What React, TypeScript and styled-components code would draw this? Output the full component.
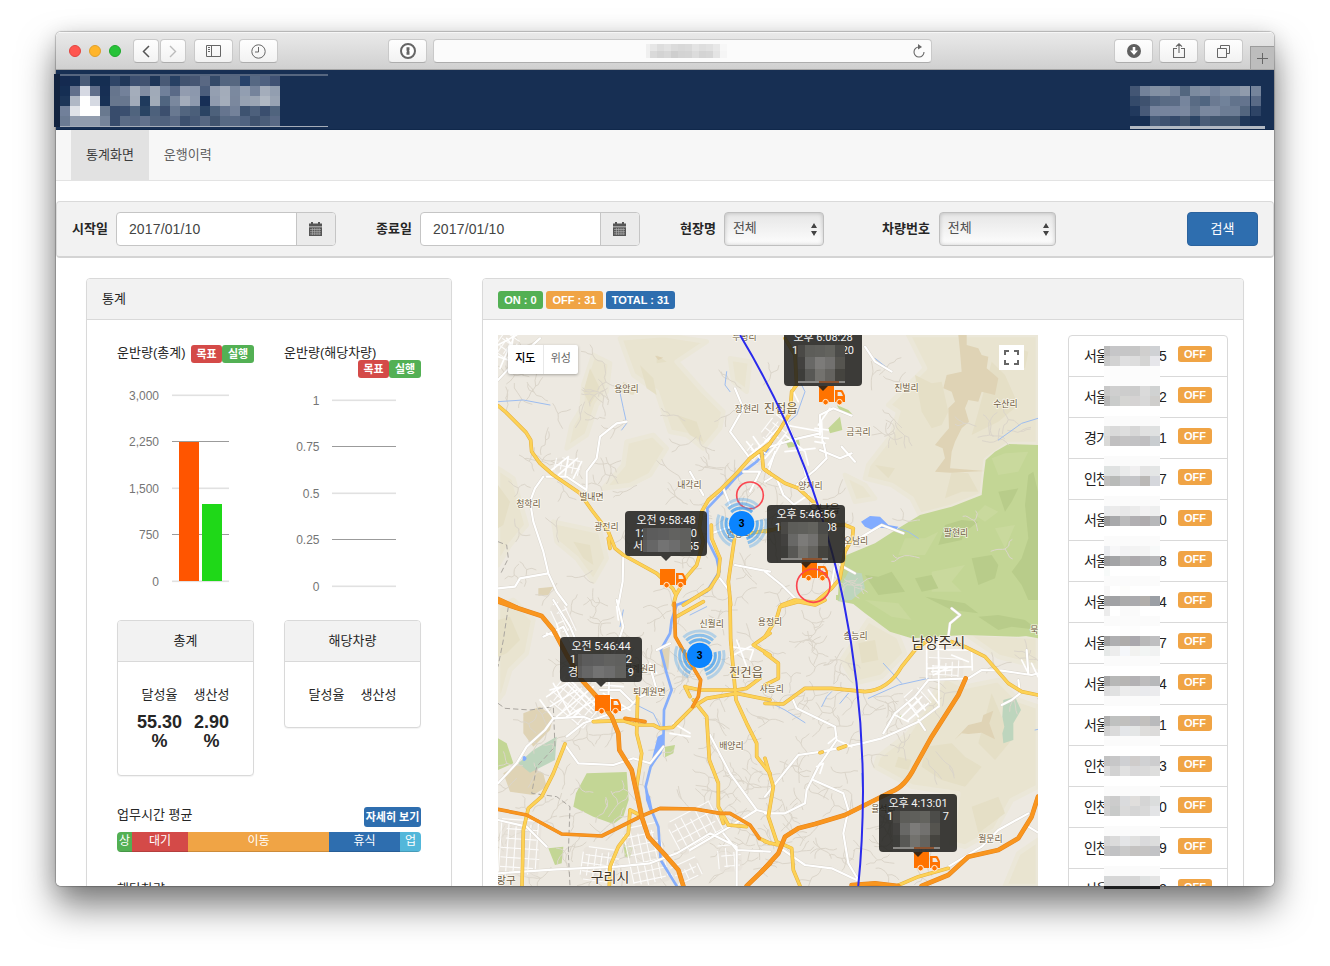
import React from 'react';
import styled, { createGlobalStyle } from 'styled-components';

const GlobalStyle = createGlobalStyle`
  * { box-sizing: border-box; }
  body { margin: 0; background: #fff; overflow: hidden; }
`;

const latin = '"Liberation Sans", "Noto Sans CJK KR", sans-serif';
const mapFont = 'Roboto, "Noto Sans CJK KR", sans-serif';

/* ---------- window ---------- */

const Desktop = styled.div`
  position: relative;
  width: 1330px;
  height: 966px;
  padding: 32px 56px 80px;
  overflow: hidden;
  background: #fff;
  font-family: ${latin};
  font-size: 13px;
  color: #262626;
`;
const Window = styled.div`
  width: 1218px;
  height: 854px;
  border-radius: 5px;
  box-shadow: 0 0 1px 1px rgba(0, 0, 0, 0.22), 0 20px 36px rgba(0, 0, 0, 0.5), 0 3px 22px rgba(0, 0, 0, 0.12);
`;
const Clip = styled.div`
  display: flex;
  flex-direction: column;
  height: 100%;
  overflow: hidden;
  border-radius: 5px;
  background: #fff;
`;
const Toolbar = styled.div`
  display: flex;
  flex: none;
  align-items: center;
  height: 38px;
  padding-left: 13px;
  border-top: 1px solid #f6f6f6;
  border-bottom: 1px solid #a5a5a5;
  background: linear-gradient(#e9e9e9, #d0d0d0);
`;
const Light = styled.span<{ $color: string; $edge: string }>`
  width: 12px;
  height: 12px;
  margin-right: 8px;
  border: 1px solid ${p => p.$edge};
  border-radius: 50%;
  background: ${p => p.$color};
`;
const ToolButton = styled.span<{ $w?: number; $ml?: number }>`
  display: flex;
  align-items: center;
  justify-content: center;
  flex: none;
  width: ${p => p.$w ?? 38}px;
  height: 24px;
  margin-left: ${p => p.$ml ?? 7}px;
  border: 1px solid #c9c9c9;
  border-bottom-color: #adadad;
  border-radius: 4px;
  background: linear-gradient(#fefefe, #f2f2f2);
`;
const Address = styled(ToolButton)`
  justify-content: flex-end;
  padding-right: 5px;
  background: #fbfbfb;
`;
const AddressMask = styled.span`
  display: flex;
  margin-right: 185px;
`;
const NewTab = styled.span`
  display: flex;
  flex: none;
  align-self: flex-end;
  align-items: center;
  justify-content: center;
  width: 24px;
  height: 23px;
  margin-left: 7px;
  border-left: 1px solid #9b9b9b;
  border-top: 1px solid #9b9b9b;
  background: #bdbdbd;
`;

/* ---------- page header ---------- */

const Banner = styled.header`
  flex: none;
  height: 60px;
  background: #172f53;
  border-bottom: 1px solid #10284b;
`;
const Nav = styled.nav`
  display: flex;
  flex: none;
  height: 51px;
  padding-left: 15px;
  border-bottom: 1px solid #e3e3e3;
  background: #f7f7f7;
`;
const NavItem = styled.a<{ $active?: boolean }>`
  padding: 0 15px;
  line-height: 49px;
  color: ${p => (p.$active ? '#3c3c3c' : '#606060')};
  background: ${p => (p.$active ? '#e2e2e2' : 'transparent')};
`;

/* ---------- search ---------- */

const SearchBar = styled.form`
  display: flex;
  flex: none;
  align-items: center;
  height: 57px;
  margin-top: 20px;
  padding: 0 15px;
  border: 1px solid #dadada;
  border-bottom: 2px solid #d4d4d4;
  border-radius: 4px;
  background: #f2f2f2;
`;
const Field = styled.label<{ $w?: number; $gap?: number }>`
  display: flex;
  align-items: center;
  flex: ${p => (p.$w ? `0 0 ${p.$w}px` : '1')};
  gap: ${p => p.$gap ?? 8}px;
  font-weight: bold;
  white-space: nowrap;
`;
const FieldName = styled.span`
  padding-bottom: 3px;
`;
const DateBox = styled.span`
  display: flex;
  width: 220px;
  height: 34px;
  overflow: hidden;
  border: 1px solid #c5c5c5;
  border-radius: 4px;
  background: #fff;
`;
const DateText = styled.span`
  flex: 1;
  padding-left: 12px;
  font-size: 14px;
  font-weight: normal;
  line-height: 32px;
  letter-spacing: 0.15px;
  color: #444;
`;
const DateAddon = styled.span`
  display: flex;
  align-items: center;
  justify-content: center;
  width: 39px;
  border-left: 1px solid #c5c5c5;
  background: #ebebeb;
`;
const SelectBox = styled.span<{ $w: number }>`
  display: flex;
  align-items: center;
  justify-content: space-between;
  width: ${p => p.$w}px;
  height: 34px;
  padding: 0 6px 0 8px;
  border: 1px solid #bfbfbf;
  border-radius: 4px;
  background: linear-gradient(#e6e6e6, #fdfdfd);
  box-shadow: inset 0 0 4px rgba(0, 0, 0, 0.2);
  font-weight: normal;
  line-height: 1;
  color: #505050;
`;
const SelectValue = styled.span`
  padding-bottom: 4px;
`;
const SearchButton = styled.button`
  width: 71px;
  height: 34px;
  padding: 0 0 3px;
  border: 1px solid #2b639e;
  border-radius: 4px;
  background: #2e6eaf;
  font: 13px ${latin};
  color: #fff;
`;

/* ---------- panels ---------- */

const Columns = styled.div`
  display: flex;
  gap: 30px;
  padding: 20px 30px 0;
`;
const Panel = styled.section<{ $w: number; $h?: number }>`
  flex: none;
  width: ${p => p.$w}px;
  height: ${p => (p.$h ? `${p.$h}px` : 'auto')};
  border: 1px solid #d9d9d9;
  border-radius: 4px;
  background: #fff;
  box-shadow: 0 1px 1px rgba(0, 0, 0, 0.05);
`;
const PanelHead = styled.div<{ $center?: boolean }>`
  display: flex;
  align-items: center;
  justify-content: ${p => (p.$center ? 'center' : 'flex-start')};
  gap: 3px;
  height: 41px;
  padding: 0 15px;
  border-bottom: 1px solid #d9d9d9;
  border-radius: 3px 3px 0 0;
  background: #f2f2f2;
`;
const HeadText = styled.span`
  padding-bottom: 4px;
`;
const BadgeRow = styled.span`
  display: flex;
  gap: 3px;
  padding-top: 2px;
`;
const colors = { green: '#53b054', orange: '#f0a445', blue: '#2e6eaf', red: '#d44a48', cyan: '#53b7da' };
type Tone = keyof typeof colors;
const Badge = styled.span<{ $tone: Tone; $w: number; $h?: number; $plain?: boolean }>`
  display: inline-flex;
  align-items: center;
  justify-content: center;
  flex: none;
  width: ${p => p.$w}px;
  height: ${p => p.$h ?? 18}px;
  border-radius: 3px;
  background: ${p => colors[p.$tone]};
  font-size: 11px;
  font-weight: bold;
  line-height: 1;
  color: #fff;
  white-space: nowrap;
`;
const StatsBody = styled.div`
  padding: 15px 30px 0;
`;
const StatsPair = styled.div<{ $h: number }>`
  display: flex;
  gap: 30px;
  align-items: flex-start;
  height: ${p => p.$h}px;
`;
const ChartColumn = styled.div`
  width: 137px;
`;
const ChartTitle = styled.div`
  display: flex;
  flex-wrap: wrap;
  justify-content: space-between;
  padding-top: 10px;
  line-height: 15px;
  white-space: nowrap;
`;
const Legend = styled.span`
  display: flex;
  margin-left: auto;
`;
const ChartSvg = styled.svg`
  display: block;
  overflow: visible;
`;
const Gauges = styled.div`
  display: grid;
  grid-template-columns: 52px 52px;
  justify-content: center;
  padding-top: 23px;
  text-align: center;
  line-height: 19px;
`;
const GaugeValue = styled.div`
  padding-top: 9px;
  font-size: 18px;
  font-weight: bold;
`;
const WorkHead = styled.div`
  display: flex;
  justify-content: space-between;
  height: 25px;
  line-height: 15px;
`;
const Progress = styled.div`
  display: flex;
  height: 20px;
  overflow: hidden;
  border-radius: 4px;
`;
const Segment = styled.span<{ $tone: Tone; $w: number }>`
  width: ${p => p.$w}px;
  background: ${p => colors[p.$tone]};
  box-shadow: inset 0 -1px 0 rgba(0, 0, 0, 0.15);
  font-size: 12px;
  line-height: 19px;
  text-align: center;
  color: #fff;
`;
const SectionLabel = styled.div`
  padding-top: 28px;
  line-height: 18px;
`;
const LiveBody = styled.div`
  display: flex;
  gap: 30px;
  padding: 15px 15px 0;
`;
const VehicleList = styled.ul`
  width: 160px;
  margin: 0;
  padding: 0;
  border: 1px solid #d9d9d9;
  border-radius: 4px 4px 0 0;
  list-style: none;
`;
const Vehicle = styled.li`
  display: flex;
  align-items: flex-start;
  height: 41px;
  padding: 10px 15px 0;
  border-bottom: 1px solid #d9d9d9;
`;
const Plate = styled.span`
  display: flex;
  justify-content: space-between;
  width: 82px;
  margin-right: 12px;
  font-size: 14px;
  line-height: 20px;
  letter-spacing: -0.8px;
  color: #222;
`;

/* ---------- map ---------- */

const MapView = styled.div`
  position: relative;
  flex: none;
  width: 540px;
  height: 552px;
  overflow: hidden;
  font-family: ${mapFont};
`;
const MapType = styled.div`
  position: absolute;
  left: 10px;
  top: 10px;
  display: flex;
  width: 70px;
  height: 29px;
  border-radius: 2px;
  background: #fff;
  box-shadow: 0 1px 3px rgba(0, 0, 0, 0.3);
  font-size: 11px;
  line-height: 28px;
  text-align: center;
`;
const MapTypeItem = styled.span<{ $on?: boolean }>`
  flex: 1;
  border-right: ${p => (p.$on ? '1px solid #e8e8e8' : 'none')};
  font-weight: ${p => (p.$on ? 500 : 400)};
  color: ${p => (p.$on ? '#000' : '#666')};
`;
const Fullscreen = styled.div`
  position: absolute;
  left: 501px;
  top: 10px;
  display: flex;
  align-items: center;
  justify-content: center;
  width: 25px;
  height: 25px;
  background: #fff;
`;
const Tip = styled.div<{ $x: number; $y: number; $w: number; $h: number }>`
  position: absolute;
  left: ${p => p.$x - 498}px;
  top: ${p => p.$y - 335}px;
  width: ${p => p.$w}px;
  height: ${p => p.$h}px;
  padding-top: 3px;
  border-radius: 4px;
  background: rgba(28, 28, 26, 0.85);
  font-size: 11px;
  line-height: 13px;
  text-align: center;
  color: #f4f4f4;
  &::after {
    content: '';
    position: absolute;
    left: calc(50% - 5px);
    top: 100%;
    border: 5px solid transparent;
    border-top-color: rgba(28, 28, 26, 0.85);
  }
`;
const TipRow = styled.div<{ $inset: number }>`
  display: flex;
  justify-content: space-between;
  padding: 0 ${p => p.$inset}px;
`;
const TipMask = styled.div<{ $x: number }>`
  position: absolute;
  left: ${p => p.$x}px;
  top: 17px;
  display: flex;
  flex-direction: column;
`;
const Overlay = styled.div<{ $x: number; $y: number }>`
  position: absolute;
  left: ${p => p.$x}px;
  top: ${p => p.$y}px;
  display: flex;
`;

/* Mosaic block: rows of space separated hex colours, "-" leaves a cell open. */
function Mosaic({ rows, cell = 10, first, rowHeight = cell }: { rows: string[]; cell?: number; first?: number; rowHeight?: number }) {
  const grid = rows.map(r => r.split(' '));
  const f = first ?? cell;
  const w = f + (Math.max(...grid.map(r => r.length)) - 1) * cell;
  return (
    <svg width={w} height={rows.length * rowHeight} shapeRendering="crispEdges">
      {grid.map((r, y) =>
        r.map((c, x) =>
          c === '-' ? null : (
            <rect key={`${x}-${y}`} x={x === 0 ? 0 : f + (x - 1) * cell} y={y * rowHeight} width={x === 0 ? f : cell} height={rowHeight} fill={`#${c}`} />
          ),
        ),
      )}
    </svg>
  );
}

const logoRows = [
  '142a50 162e53 4b5c78 152e51 152e52 2f4567 203759 3c4f70 415270 1e3658 495a76 274063 42536f 465673 596883 344a69 53657f 566780 27426a 566883 4f6180 3f5173',
  '152e53 62708c d6d9e3 616f8b 172f54 66758d 73819a a4adbb 818da3 a0aab8 70809a 5a6a87 929caf 8c98ad 4c5e7c 949fb1 a3acba 7b899f 929eb1 75839b a4adbb 929eb0',
  '1c3558 b0b8c5 ffffff d5d9e2 183155 68778e 68778f a2abb9 1f3a5d a1abb8 506580 7a889e a3acba 8e9aae 172f56 919caf a4adbb 7b889e 97a2b2 9ba5b4 b0b8c3 98a3b3',
  '71809a e0e3e8 ffffff ffffff 69798f 384c6c 3b4f6f 50647e 294363 4d617c 3c4f6e 697991 52657f 4b5f7a 2a4363 4d617b 66758f 74829a 3e5370 4d607c 3a4e6e 50647e',
  '6b7b93 929dae 929dae 929dae 75849a 384c6c 5b6c86 566782 62718c 52647e 50627e 5b6b86 3c506e 475a77 566782 42556f 586a84 586984 506380 40536f 4a5d79 596985',
];
const accountRows = [
  '435674 73829a 8290a3 8491a3 75849b 52667f 7c8b9f 8390a5 76859d 8290a4 8391a5 909bac',
  '344a6a 3f526f 50637e 596b84 5b6c86 76859d 596b84 506580 6b7a92 71829a 62738c 64748e',
  '21395d 485a78 76849d 76849d 76849e 7a889f 62738b 7a889f 7a889f 6d7d95 6d7d95 53667f',
  '172f53 172f53 475b78 3e5270 34496a 43566f 2b4464 4b5d78 42566f 42556f 43566f 203859',
];
const accountEdge = ['75849b', '596a86', '2e4466', '182f53'];
const plateRows = [
  'bbbbbb c6c6c8 c6c6c7 c6c6c6 d0cfce cfd1d4', 'c9caca d2d2d2 dfdfe0 dddddd d5d5d4 e6e6ea', 'fdfdfd fcfcfc fcfcfc fcfcfc fcfcfc fcfcfc', 'fdfdfd fcfcfc fcfcfc fcfcfc fcfcfc fcfcfc',
  'c8c8c8 cfcfcf cdcdcd cccccc dadada d0d2d2', 'b9b9b9 cacccb d5d5d3 d5d3d3 d8d8d8 cfcecc', 'ffffff ffffff ffffff ffffff ffffff ffffff', 'fbfbfb fbfbfb fbfbfb fbfbfb fbfbfb fbfbfb',
  'dedfde dadada dedede d7d7d7 e1e1e1 dfe1e1', 'd9d9d7 c0bfc0 c4c3c4 c2c2c4 c0bfc1 c9cdd0', 'ffffff ffffff ffffff ffffff ffffff ffffff', 'fbfbfb fbfbfb fbfbfb fbfbfb fbfbfb fbfbfb',
  'dee2e1 e0e2e2 eaebeb f1f0f1 e4e4e4 e4e6e6', 'c0bfbe b8bab8 c5c6c8 c5c5c8 bab8b6 d5d7dc', 'ffffff ffffff ffffff ffffff ffffff ffffff', 'fbfbfb fbfbfb fbfbfb fbfbfb fbfbfb fbfbfb',
  'e8eaec ebebeb e7e7e8 ebebeb f2f1f2 eeefef', '9b9b9b a8a9ab bbbbbc b1afb2 afacae b7b8ba', 'ffffff ffffff ffffff ffffff ffffff ffffff', 'fbfbfb fbfbfb fbfbfb fbfbfb fbfbfb fbfbfb',
  'eaecef f7f7f8 f2f2f3 f3f3f3 f4f4f4 f7f9f9', '9c9d9e a3a4a6 b1b1b1 aca9ac b1b1b3 b5b6b8', 'f7faf9 ffffff ffffff ffffff ffffff ffffff', 'fbfbfb fbfbfb fbfbfb fbfbfb fbfbfb fbfbfb',
  'f7f7f7 ffffff fdfdfb ffffff ffffff ffffff', 'a2a2a3 a1a2a5 ababab aaaaae b1aeab 9b9fa5', 'ececec ffffff fafafa fafafa ffffff ffffff', 'fbfbfb fbfbfb fbfbfb fbfbfb fbfbfb fbfbfb',
  'ffffff ffffff fdfdfd fdfdfd ffffff ffffff', 'a1a1a1 afafb1 aeacab aaa8ad b9b9b9 bfbfc1', 'e5e8e7 ededed f5f7fa f2f2f0 f2f5f4 f1f2f2', 'fbfbfb fbfbfb fbfbfb fbfbfb fbfbfb fbfbfb', 'ffffff ffffff ffffff ffffff ffffff ffffff',
  'a7a7a8 b7b8b7 b7b5b3 b3b1b4 bdbcbd b7b8ba', 'dcdcdd e0e1e1 ececec eaeaeb e9eaed ebebed', 'fbfbfb fbfbfb fbfbfb fbfbfb fbfbfb fbfbfb', 'ffffff ffffff ffffff ffffff ffffff ffffff',
  'afafaf bfc1c0 c1c0be bdbdc0 c2c0bd b9babc', 'd1d1d1 dadada e4e6e9 e4e6e6 dedddb dcdbda', 'fbfbfb fbfbfb fbfbfb fbfbfb fbfbfb fbfbfb', 'ffffff ffffff ffffff ffffff ffffff ffffff',
  'c3c3c3 c7c7c8 cfd0d3 cfcccb d0d1d3 cdcdce', 'dedede d2d2d2 e1e1e1 d9d8d9 dadada dededd', 'ffffff ffffff ffffff ffffff ffffff ffffff', 'fbfbfb fbfbfb fbfbfb fbfbfb fbfbfb fbfbfb',
  'd0d0d0 cccccc dadbdd e0dedc d5d5d5 dbdddd', 'd2d2d2 c8cac9 dadada d5d5d5 d9d9d9 e3e4e6', 'ffffff ffffff ffffff ffffff ffffff ffffff', 'fbfbfb fbfbfb fbfbfb fbfbfb fbfbfb fbfbfb',
  'd5d5d6 dbdbdb e4e5e7 e1e1e0 dadadc dcdddd', 'c5c5c6 c1c2c4 cacaca c5c3c1 c5c4c4 c2c3c6', 'ffffff ffffff ffffff ffffff ffffff ffffff', 'fbfbfb fbfbfb fbfbfb fbfbfb fbfbfb fbfbfb',
  'd5d7d8 d7d7d7 d7d7d8 d6d6d6 e0e2e2 e5e5e5',
];

/* Map drawing units are a third of a pixel; the sheet is cut in four 825-unit quarters. */
const quarters = { nw: [0, 0], ne: [825, 0], sw: [0, 825], se: [825, 825] } as const;
type Quarter = keyof typeof quarters;
type Sheet = Partial<Record<Quarter, string>>;
function Layer({ sheet, stroke = 'none', width, fill = 'none', dash }: { sheet: Sheet; stroke?: string; width?: number; fill?: string; dash?: string }) {
  return (
    <>
      {(Object.keys(sheet) as Quarter[]).map(q => (
        <path key={q} transform={`translate(${quarters[q][0]} ${quarters[q][1]})`} d={sheet[q]} stroke={stroke} strokeWidth={width} fill={fill} strokeDasharray={dash} strokeLinejoin="round" strokeLinecap={dash ? 'butt' : 'round'} />
      ))}
    </>
  );
}

const hills: Sheet = {
  nw: 'M310 90L360 115 350 200 320 240 290 330 230 370 245 300 275 250 280 180ZM390 40L520 30 650 50 560 110 640 200 700 260 690 310 640 370 590 330 540 320 500 200 430 150ZM410 350L490 330 530 370 480 450 420 480 340 490 400 420ZM190 590L330 620 350 700 310 770 260 700 200 650ZM24 430L70 460 110 600 60 660 24 720ZM720 100L780 110 770 200 730 170Z',
  ne: 'M430 30L819 30 819 357 730 357 662 405 650 510 560 545 465 570 440 520 380 480 300 460 310 420 380 330 400 260 370 240 430 180 480 130ZM240 450L300 480 330 520 270 530Z',
  sw: 'M24 20L70 0 130 60 110 160 60 210 40 280 24 300ZM300 130L340 150 330 200 300 180Z',
  se: 'M540 230L600 260 700 240 760 300 819 320 819 560 740 600 690 690 600 740 560 730 580 580 440 560 330 500 340 470 430 400ZM230 180L310 60 400 110 420 160 350 230 270 250ZM600 100L819 110 819 200 700 170ZM720 858L760 760 819 720 819 858Z',
};
const darkHills: Sheet = {
  nw: 'M400 170L440 190 430 210 390 200ZM500 90L530 110 500 115ZM560 270L620 290 640 350 600 330ZM24 480L60 530 40 600 24 610ZM450 120L490 160 500 210 470 190ZM300 130L330 190 300 240 280 200ZM250 650L300 660 310 720 280 700Z',
  ne: 'M450 150L500 175 530 170 550 260 530 300 500 310 470 260ZM680 110L720 150 760 240 700 290 620 330 640 260ZM560 440L610 445 640 500 590 500 540 520ZM330 420L390 430 370 460ZM730 60L790 80 780 130 750 110Z',
  sw: 'M24 60L60 50 90 120 50 160 24 170Z',
  se: 'M480 440L560 430 600 470 650 500 600 560 530 540 470 500ZM680 280L740 420 690 480 640 430ZM620 620L700 590 720 640 640 700ZM400 470L440 480 430 510 390 500ZM280 130L330 120 340 180 290 190Z',
};
const ridges: Sheet = {
  ne: 'M580 30L605 30 605 60 640 70 650 90 670 95 665 130 700 160 690 210 650 200 640 230 610 225 600 250 612 290 590 310 570 350 560 380 555 430 660 438 555 443 510 440 540 400 533 370 510 360 530 335 552 310 550 250 570 230 560 200 535 190 545 150 590 140 585 80Z',
  se: 'M568 420L610 375 650 365 655 345 685 332 673 370 680 390 690 418 650 398 610 402 590 400Z',
  sw: 'M100 340L150 320 190 350 180 390 130 440 100 400ZM40 520L90 490 160 520 170 560 130 585 60 575ZM515 150L540 140 535 210 515 200Z',
  nw: 'M145 790L190 785 175 810 145 812ZM495 92L520 98 505 105Z',
};
const forest: Sheet = {
  ne: 'M819 360L730 357 690 380 662 405 655 460 650 510 560 545 465 570 400 610 330 655 245 690 225 715 218 828 819 940Z',
  se: 'M213 0L250 0 300 40 375 95 440 115 600 105 760 110 819 105 819 -15 213 -15ZM400 350L410 345 410 358Z',
  sw: 'M290 520L410 516 416 600 400 650 370 672 310 650 250 620 258 580ZM24 415L50 430 70 490 24 510ZM525 440L555 435 550 460 525 472ZM175 745L220 740 215 790 195 795ZM400 730L428 745 420 775 405 770Z',
};
const parks: Sheet = {
  ne: 'M215 240L250 255 262 268 230 265ZM190 310L225 275 232 315 195 325ZM60 345L100 335 105 362 70 368Z',
};
const forestShade: Sheet = {
  ne: 'M790 450L805 440 819 500 819 825 790 825 770 780 740 740 770 700 790 640 780 540ZM540 600L590 585 640 590 600 620 590 645 520 660ZM620 700L680 690 700 720 690 760 640 780ZM300 750L340 755 380 740 420 800 340 810ZM700 500L760 490 740 530 720 560ZM450 760L500 750 520 790 470 800Z',
  se: 'M480 -10L600 10 640 40 560 30ZM640 50L700 45 780 60 819 90 740 80 700 90Z',
};
const forestLight: Sheet = {
  ne: 'M680 400L720 385 790 380 760 440 700 450ZM420 640L480 640 520 620 480 690 400 690ZM500 740L600 720 560 770 590 800 500 800ZM690 610L750 600 720 670ZM660 540L700 560 660 590 630 570Z',
  se: 'M300 0L400 10 440 60 380 50Z',
};
const wetlands: Sheet = {
  sw: 'M200 410L195 480 120 518 85 490 130 450Z',
  se: 'M715 300L750 290 768 330 745 370 745 420 715 430 712 400 718 380 712 350Z',
  ne: 'M250 740L290 745 300 790 260 825 220 828 235 770Z',
};
const water: Sheet = {
  ne: 'M288 590L315 573 345 575 370 600 400 605 395 612 345 608 325 616 300 605Z',
  sw: 'M98 470A7 7 0 1 1 98 481ZM503 410L522 400 515 460 495 485 485 480ZM466 570L480 590 490 640 482 640 468 600Z',
};
const river: Sheet = {
  nw: 'M840 365L800 410 740 455 695 505 652 550 655 650 680 700 688 740 650 800 600 825 560 840',
  sw: 'M560 15L545 60 540 100 512 150 530 220 545 270 522 330 520 440 482 500 467 560 480 620 505 680 512 780 560 858',
  ne: 'M0 380L20 350',
};
const streams: Sheet = {
  nw: 'M24 230L100 225 180 240M385 180L400 250 410 295 395 315M710 140L705 180 720 200',
  ne: 'M95 150L120 200 95 270 60 300M330 100L380 140M819 280L770 295 700 345M400 610L430 620 460 640',
  sw: 'M430 310L490 340 515 390M390 80L400 30M600 45L650 20',
  se: 'M0 300L60 330 120 368M310 295L400 255 490 235M170 320L185 290 200 275M355 190L410 250M810 390L819 388M225 310L250 280M290 520L292 560',
};
const boundary: Sheet = {
  nw: 'M24 650L50 660 55 700 30 750',
  sw: 'M55 20L40 120 24 200M24 310L45 325 120 330 190 320 195 440 140 500 125 580 200 590 240 620 235 760 240 858',
};
const whiteRoads: Sheet = {
  nw: 'M160 455L135 490 120 530 130 590 160 680 175 745 200 800 230 840M170 455L230 455 290 495M290 490L290 440 320 400 330 335 380 295 410 290M400 690L398 770 385 840M24 790L75 785 90 760 175 745M780 400L720 320 760 250 735 190M640 510L600 440M760 440L810 440 780 500M665 625L735 600M735 720L840 740M690 760L720 800M24 165L90 95 150 40M700 490L720 540',
  ne: 'M65 290L110 400 122 450M0 370L100 340 165 325M165 330L165 270 205 250 260 272M175 350L185 400 150 435 95 480M300 65L330 110 380 140M165 375L225 400 260 385M230 365L270 410M35 460L55 510 110 560M350 600L240 665M210 720L200 780M350 600L415 625M0 740L50 780 90 820M225 720L270 745M0 470L25 455M30 380L10 440',
  sw: 'M24 550L80 490 110 440 165 390 190 355 280 350 320 365M190 0L240 80 270 150M355 290L360 200 400 80 380 0M230 410L280 370 420 320 443 295M225 435L265 490 370 495 430 475 480 490 520 440M480 200L500 270 440 295M660 405L720 520 800 630 840 640M740 858L740 740 660 700 560 760 480 790M800 630L720 680 600 750M24 820L200 808 380 800 480 790M24 660L110 680 170 740M500 150L540 130M330 270L390 270 430 310M700 700L740 750 840 755M160 110L220 80 260 160',
  se: 'M80 290L95 325 210 380 215 420 160 500 125 570 120 610M0 590L100 465 170 455 290 430 350 415 395 395 460 365 520 320M355 400L390 340 450 290 490 240 610 235 650 210 710 212 800 225 840 215M550 110L555 70 585 45 560 25M145 540L235 580 250 630 235 700 250 790 280 840M40 740L120 795 200 805 275 840M550 800L650 740 700 690 790 640M760 240L765 280 740 300 710 315M790 220L785 150M0 640L60 640 120 610M790 680L840 710M460 360L480 390M140 540L165 490',
};
const cityRoads: Sheet = {
  nw: 'M185 435L235 395M205 450L262 400M225 455L235 395M250 460L275 410M24 60L80 30M30 130L60 60M24 95L70 110M50 40L90 90M70 30L60 110M780 390L840 340M770 350L810 400M790 335L825 385',
  ne: 'M0 400L60 330 120 380M0 350L50 300M10 420L50 350M60 380L150 370M60 300L170 320M150 310L190 315M150 335L190 340M150 350L180 355M170 290L172 350M195 250L160 300M80 190L100 230M120 380L130 420M85 540L130 510',
  se: 'M485 130L485 235M520 125L522 320M485 145L550 150 620 150 622 210M485 205L622 200M500 215L560 210M505 225L555 200M560 165L610 185M410 350L470 290M430 360L490 310M450 290L480 330M430 310L460 350M390 345L430 365M490 270L520 310M155 500L175 490 165 520M190 430L215 410M770 180L790 220M800 190L819 230M215 420L260 440',
  sw: 'M190 250L240 340M170 290L230 250 310 330M180 320L260 270M200 350L310 260M230 350L330 290M150 300L190 355M340 280L420 330M340 255L400 260M380 20L385 60M170 100L210 110 200 70M215 260L180 270M240 240L340 340M250 350L290 310M550 370L600 400M540 400L600 410M720 140L790 150 780 180M740 120L770 200M720 170L800 130M480 190L500 220',
};
const yellowRoads: Sheet = {
  nw: 'M24 242L48 262 108 322 122 345 125 380 150 415 190 450 270 505 305 555 355 620 375 670 400 690 500 745 548 790 558 810M840 355L780 400 740 445 690 495 655 525 635 560 628 610 640 650 620 720 590 755 558 810 550 840M664 600L665 640 690 700 685 750 660 790 620 815 580 840M735 630L725 700 715 770 722 840M815 380L820 430 840 445M750 630L840 615M355 640L360 670',
  ne: 'M0 375L40 320 75 265 80 200 95 180 90 90 60 40M0 435L60 475 100 490 150 535 190 580M0 620L60 605 240 600 265 610 262 640 240 680 225 760 200 790 150 832 90 825 50 840M165 690L190 560',
  sw: 'M225 432L190 520 155 590 115 625 100 690 96 858M455 648L420 630 415 700 385 740 360 800 358 858M443 290L440 400 455 460 440 560 455 640M310 365L400 362 440 375 490 375 510 385 548 382 610 320 650 295 740 280 840 300M585 260L630 270 740 270 770 265 810 235M610 300L650 350 658 480 685 550 685 620 715 675 770 680M720 0L722 120 738 300 770 370 800 430 800 470 840 520M840 100L790 135 840 165M560 50L640 5M690 640L700 670M585 260L600 290M808 715L840 730',
  se: 'M0 310L55 312 120 265 200 265 300 275Q370 270 410 200L450 150 490 120M560 125L600 140 660 170 730 250 770 275 819 285M0 160L40 190 40 235 0 255M0 110L35 55 45 20 100 5 150 15 180 0M0 475L25 560 10 650 35 725 80 745 85 810 105 858M0 725L40 735M395 858L460 830 550 805M165 458L172 456M220 446L242 438',
};
const highways: Sheet = {
  nw: 'M24 822L80 848',
  sw: 'M24 5L155 48 190 90 230 165 275 240 320 290 365 350 385 400 388 450 425 510 440 580 455 650 475 710 530 770 565 810 580 858M770 858L840 790',
  se: 'M602 235L580 285 500 410 450 500Q420 560 380 575L330 600 240 645 150 672 100 685 60 710 40 760 -10 815M260 855L330 850 400 858M470 858L550 825 610 770 700 750 760 715 800 650 819 590',
};
const ringRoads: Sheet = {
  sw: 'M24 628L110 645 215 702 335 708 455 648 510 625 615 627 690 640 720 640 780 675 808 715M405 355L465 365M553 10L556 110 590 170 632 240 625 290 608 320',
};

function random(seed: number) {
  let s = seed;
  return () => {
    s = (s * 1664525 + 1013904223) % 4294967296;
    return s / 4294967296;
  };
}

/* Country lanes that fork as they climb the valleys: [x, y, width, height, count]. */
const laneAreas = [
  [30, 60, 330, 360, 20], [560, 140, 270, 200, 6], [560, 400, 280, 420, 26], [840, 480, 260, 330, 22],
  [1120, 60, 120, 420, 8], [330, 60, 60, 260, 7], [60, 480, 240, 330, 9], [320, 480, 240, 160, 5],
  [420, 830, 400, 820, 72], [830, 840, 330, 820, 64], [40, 1100, 380, 560, 40], [1150, 1080, 240, 220, 12],
  [1150, 1440, 200, 220, 10], [1560, 960, 90, 200, 5], [1440, 300, 190, 80, 6], [1240, 550, 300, 160, 4], [240, 830, 250, 250, 16],
];
function buildLanes() {
  const r = random(77);
  let d = '';
  const grow = (x: number, y: number, a: number, steps: number) => {
    d += `M${x.toFixed(0)} ${y.toFixed(0)}`;
    for (let i = 0; i < steps; i++) {
      a += (r() - 0.5) * 1.3;
      x += Math.cos(a) * (7 + r() * 10);
      y += Math.sin(a) * (7 + r() * 10);
      d += `L${x.toFixed(0)} ${y.toFixed(0)}`;
    }
    return [x, y, a];
  };
  for (const [ax, ay, w, h, n] of laneAreas) {
    for (let i = 0; i < n; i++) {
      const [x, y, a] = grow(ax + r() * w, ay + r() * h, r() * 6.28, 4);
      grow(x, y, a + 0.7, 3);
      grow(x, y, a - 0.7, 3);
    }
  }
  return d;
}
const lanes = buildLanes();

/* Town streets: [cx, cy, width, height, angle, step]. */
const towns = [
  [260, 1130, 150, 110, 40, 20], [90, 1570, 120, 170, 4, 22], [470, 1590, 110, 180, -12, 21],
  [620, 1510, 150, 110, -28, 24], [330, 1620, 110, 100, 8, 19], [50, 65, 60, 70, 35, 17], [235, 425, 80, 45, 12, 18],
  [860, 320, 70, 80, 38, 20], [800, 390, 60, 45, 40, 16], [1365, 1030, 110, 60, 3, 19], [1280, 1130, 70, 60, 48, 19],
  [720, 1600, 70, 80, -5, 24], [220, 880, 50, 100, -25, 22], [590, 1640, 90, 60, -25, 21],
];
function Towns() {
  return (
    <>
      {towns.map(([cx, cy, w, h, a, step], i) => {
        let d = '';
        for (let x = -w / 2; x <= w / 2; x += step) d += `M${x} ${-h / 2 + (Math.abs(x * 7) % 23)}V${h / 2 - (Math.abs(x * 3) % 19)}`;
        for (let y = -h / 2; y <= h / 2; y += step * 1.3) d += `M${-w / 2 + (Math.abs(y * 3) % 17)} ${y}H${w / 2 - (Math.abs(y * 5) % 21)}`;
        return (
          <g key={i} transform={`translate(${cx} ${cy}) rotate(${a})`}>
            <rect x={-w / 2} y={-h / 2} width={w} height={h} rx="14" fill="#e6e1d8" opacity="0.6" />
            <path d={d} stroke="#fff" strokeWidth="3.4" fill="none" opacity="0.85" />
          </g>
        );
      })}
    </>
  );
}

type Place = [string, number, number, number?];
const places: Place[] = [
  ['용암리', 409, 190], ['장현리', 771, 250], ['내각리', 598, 478], ['별내면', 304, 515], ['청학리', 115, 537], ['광전리', 349, 604],
  ['두평리', 763, 35], ['진접읍', 872, 250, 37], ['진벌리', 1249, 187], ['수산리', 1546, 236], ['금곡리', 1105, 321], ['양지리', 961, 482],
  ['오남읍', 1003, 553, 34], ['오남리', 1098, 647], ['팔현리', 1398, 624], ['연평리', 745, 625], ['신월리', 665, 895], ['용정리', 840, 890], ['진건읍', 768, 1043, 37],
  ['퇴계원리', 450, 1032], ['퇴계원면', 478, 1100], ['배양리', 724, 1262], ['사능리', 845, 1092], ['구리시', 360, 1656, 42], ['랑구', 48, 1666, 32],
  ['송능리', 1096, 932], ['남양주시', 1345, 953, 44], ['묵', 1633, 915], ['율석리', 1180, 1452], ['월문리', 1501, 1540],
];

const Label = styled.text<{ $size: number }>`
  font-family: 'Noto Sans CJK KR', sans-serif;
  font-size: ${p => p.$size}px;
  text-anchor: middle;
  fill: ${p => (p.$size > 40 ? '#3d3326' : '#6d5a3f')};
  stroke: #fffdf6;
  stroke-width: 5px;
  stroke-opacity: 0.75;
  stroke-linejoin: round;
  paint-order: stroke;
`;

function arc(cx: number, cy: number, r: number, mid: number, half: number) {
  const p = (deg: number) => {
    const t = (deg * Math.PI) / 180;
    return `${(cx + r * Math.cos(t)).toFixed(1)} ${(cy + r * Math.sin(t)).toFixed(1)}`;
  };
  return `M${p(mid - half)}A${r} ${r} 0 0 1 ${p(mid + half)}`;
}
function Cluster({ x, y }: { x: number; y: number }) {
  return (
    <g>
      {[47, 60, 73].map((r, i) => (
        <g key={r} stroke="#3d9df0" strokeWidth="9" fill="none" opacity={[0.75, 0.55, 0.32][i]}>
          {[-90, 30, 160].map(m => (
            <path key={m} d={arc(x, y, r, m, 42)} />
          ))}
        </g>
      ))}
      <circle cx={x} cy={y} r="38" fill="#0a84ff" />
      <text x={x} y={y + 11} textAnchor="middle" fontFamily="Liberation Sans, sans-serif" fontWeight="bold" fontSize="31" fill="#000">3</text>
    </g>
  );
}
function Truck({ x, y }: { x: number; y: number }) {
  return (
    <g transform={`translate(${(x - 490) * 3} ${(y - 325) * 3}) scale(3)`}>
      <path d="M0 0H15V16H0Z" fill="#ff7300" />
      <path d="M16 4H22.2Q23.4 4 24 5.2L25.6 8.6Q26 9.4 26 10.2V16H16ZM18.6 6V10H24L22.3 6.6Q22 6 21.4 6Z" fill="#ff7300" fillRule="evenodd" />
      {[6.6, 20.5].map(cx => (
        <circle key={cx} cx={cx} cy="16.2" r="2.8" fill="#ff7300" stroke="#fff3e0" strokeWidth="1" />
      ))}
    </g>
  );
}

function MapCanvas() {
  return (
    <svg width="540" height="551" viewBox="24 30 1620 1653">
      <rect x="0" y="0" width="1700" height="1700" fill="#ede9e1" />
      <Layer sheet={hills} fill="#e9e4d0" stroke="#ebe7d8" width={14} />
      <Layer sheet={darkHills} fill="#e5dfc6" />
      <Layer sheet={ridges} fill="#dfd3b5" />
      <Layer sheet={forest} fill="#c3d695" />
      <Layer sheet={parks} fill="#c3d695" />
      <Layer sheet={forestLight} fill="#c9d99d" />
      <Layer sheet={forestShade} fill="#b8cc8a" />
      <Layer sheet={wetlands} fill="#bdd5bd" />
      <path d={lanes} stroke="#dbd5ca" strokeWidth="3" fill="none" strokeLinejoin="round" />
      <Towns />
      <Layer sheet={boundary} stroke="#aaa6a0" width={3} dash="16 9" />
      <Layer sheet={streams} stroke="#9dbdf0" width={3} />
      <Layer sheet={river} stroke="#86aefb" width={8} />
      <Layer sheet={water} fill="#82acff" />
      <Layer sheet={whiteRoads} stroke="#d8d3ca" width={9} />
      <Layer sheet={cityRoads} stroke="#fff" width={5} />
      <Layer sheet={whiteRoads} stroke="#fff" width={6.5} />
      <Layer sheet={yellowRoads} stroke="#e4b040" width={11} />
      <Layer sheet={yellowRoads} stroke="#fdd256" width={8} />
      <Layer sheet={ringRoads} stroke="#e5831c" width={11} />
      <Layer sheet={ringRoads} stroke="#f9961f" width={8} />
      <Layer sheet={highways} stroke="#e5831c" width={14} />
      <Layer sheet={highways} stroke="#f9961f" width={11} />
      {places.map(([name, x, y, size = 26.5]) => (
        <Label key={name} x={x} y={y + size * 0.36} $size={size}>{name}</Label>
      ))}
      <circle cx="780" cy="511" r="40" fill="none" stroke="#fb4650" strokeWidth="5" />
      <Cluster x={755} y={596} />
      <Cluster x={629} y={991} />
      <Truck x={660} y={569} />
      <Truck x={819} y={386} />
      <Truck x={802} y={562} />
      <Truck x={595} y={695} />
      <Truck x={914} y={852} />
      <circle cx="970" cy="782" r="50" fill="none" stroke="#fb4650" strokeWidth="5" />
      <path d="M750 30Q870 230 945 430T1060 825Q1118 1110 1119 1400Q1118 1560 1104 1690" fill="none" stroke="#2a2aec" strokeWidth="6" />
    </svg>
  );
}

interface TipData { x: number; y: number; w: number; h: number; time: string; a: [string, string]; b?: [string, string]; }
const tips: TipData[] = [
  { x: 625, y: 511, w: 82, h: 45, time: '오전 9:58:48', a: ['12', '0'], b: ['서', '55'] },
  { x: 784, y: 328, w: 78, h: 58, time: '오후 6:08:28', a: ['12', '20'] },
  { x: 767, y: 505, w: 78, h: 58, time: '오후 5:46:56', a: ['1', '08'] },
  { x: 560, y: 637, w: 82, h: 45, time: '오전 5:46:44', a: ['1', '2'], b: ['경', '9'] },
  { x: 879, y: 794, w: 78, h: 58, time: '오후 4:13:01', a: ['1', '7'] },
];
const wideMask = ['555452 5c5c5c 5e5e5e 626260 60605e', '5b5b5b 666666 737373 6d6d6d 62625f'];
const tallMask = ['4a4946 5d5d59 5f5f5b 63635e 4c4c49', '42413f 686866 7c7b79 72716f 55544f', '3d3d3a 585855 73726e 64635f 45443f'];

/* ---------- charts ---------- */

interface ChartProps { labels: string[]; axis: number; from: number; to: number; top: number; bars?: [number, number, string][]; }
function BarChart({ labels, axis, from, to, top, bars = [] }: ChartProps) {
  return (
    <ChartSvg width="137" height="222">
      {labels.map((l, i) => {
        const y = top + i * 46.5;
        return (
          <g key={l}>
            <text x={axis} y={y + 4.5} textAnchor="end" fontFamily="Liberation Sans, sans-serif" fontSize="12" fill="#757575">{l}</text>
            <rect x={from} y={i % 2 ? Math.floor(y) : y - 0.5} width={to - from} height={i % 2 ? 1 : 1.6} fill={i % 2 ? '#9b9b9b' : '#e1e1e1'} />
          </g>
        );
      })}
      {bars.map(([x, h, c]) => (
        <rect key={x} x={x} y={top + 186 - h} width="20" height={h} fill={c} />
      ))}
    </ChartSvg>
  );
}

const Stroke = (p: React.SVGProps<SVGSVGElement>) => <svg fill="none" stroke="#666" strokeWidth="1" {...p} />;

function CalendarIcon() {
  return (
    <svg width="13" height="14" fill="#555">
      <path d="M0 1.5H13V4.5H0Z" />
      <path d="M2 0H4V2H2ZM9 0H11V2H9Z" />
      <path d="M0 5.3H13V14H0Z" />
      <path d="M1 7.5H12M1 9.7H12M1 11.9H12M3.4 6V13M5.7 6V13M8 6V13M10.2 6V13" stroke="#bbb" strokeWidth="0.6" />
    </svg>
  );
}
function Arrows() {
  return (
    <svg width="6" height="13" fill="#444">
      <path d="M3 0L6 5H0ZM3 13L6 8H0Z" />
    </svg>
  );
}

const vehicles: [string, string][] = [
  ['서울', '5'], ['서울', '2'], ['경기', '1'], ['인천', '7'], ['서울', '0'], ['서울', '8'], ['서울', '4'],
  ['서울', '7'], ['서울', '4'], ['서울', '1'], ['인천', '3'], ['인천', '0'], ['인천', '9'], ['서울', '2'],
];

function SafariToolbar() {
  return (
    <Toolbar>
      <Light $color="#ff5650" $edge="#e2443f" />
      <Light $color="#ffb52b" $edge="#e0a02a" />
      <Light $color="#27c339" $edge="#1ea92c" />
      <ToolButton $w={26} $ml={4}><Stroke width="8" height="13" stroke="#555" strokeWidth="1.5"><path d="M7 1L1.5 6.5 7 12" /></Stroke></ToolButton>
      <ToolButton $w={26} $ml={1}><Stroke width="8" height="13" stroke="#bbb" strokeWidth="1.4"><path d="M1 1L6.5 6.5 1 12" /></Stroke></ToolButton>
      <ToolButton $w={39} $ml={8}><Stroke width="15" height="12"><path d="M.5 .5H14.5V11.5H.5ZM5.5 .5V11.5M2 2.5H4M2 4.5H4M2 6.5H4" /></Stroke></ToolButton>
      <ToolButton $w={39} $ml={6}><Stroke width="15" height="15"><circle cx="7.5" cy="7.5" r="6.7" /><path d="M7.5 3V8H4" /></Stroke></ToolButton>
      <ToolButton $w={39} $ml={110}>
        <svg width="16" height="16"><circle cx="8" cy="8" r="7" fill="#fff" stroke="#666" strokeWidth="2" /><path d="M6.5 4.2H9.5V7L9 7.8 9.5 8.5V11.8H6.5V9L7 8.2 6.5 7.5Z" fill="#666" /></svg>
      </ToolButton>
      <Address $w={499} $ml={6}>
        <AddressMask>
          <Mosaic cell={7} first={4} rows={['f0f0f0 e6e6e6 dddddd e2e2e2 dbdbdb d8d8d8 dadada e3e3e3 dedede e1e1e1 e8e8e8 f7f7f7', 'f0f0f0 d9d9d9 d3d3d3 d7d7d7 cecece d3d3d3 d4d4d4 dcdcdc d4d4d4 d6d6d6 e4e4e4 f5f5f5']} />
        </AddressMask>
        <Stroke width="14" height="15" strokeWidth="1.1"><path d="M7 3A5 5 0 1 0 12 8" /><path d="M6 0L10 3 6 5.6Z" fill="#666" stroke="none" /></Stroke>
      </Address>
      <ToolButton $w={39} $ml={182}>
        <svg width="14" height="14"><circle cx="7" cy="7" r="7" fill="#5f5f5f" /><path d="M5.7 3H8.3V6.6H11L7 11 3 6.6H5.7Z" fill="#fff" /></svg>
      </ToolButton>
      <ToolButton $w={39} $ml={6}><Stroke width="12" height="16" strokeWidth="1.1"><path d="M4 5.5H.5V14.5H11.5V5.5H8M6 10V1M3 3.6L6 .8 9 3.6" /></Stroke></ToolButton>
      <ToolButton $w={39} $ml={6}><Stroke width="13" height="13"><path d="M.5 3.5H9.5V12.5H.5ZM3.5 3V.5H12.5V8.5H10" /></Stroke></ToolButton>
      <NewTab><Stroke width="11" height="11"><path d="M5.5 0V11M0 5.5H11" /></Stroke></NewTab>
    </Toolbar>
  );
}

export default function App() {
  return (
    <Desktop>
      <GlobalStyle />
      <Window>
        <Clip>
          <SafariToolbar />
          <Banner />
          <Nav>
            <NavItem $active>통계화면</NavItem>
            <NavItem>운행이력</NavItem>
          </Nav>
          <SearchBar>
            {['시작일', '종료일'].map(l => (
              <Field key={l} $w={304}>
                <FieldName>{l}</FieldName>
                <DateBox>
                  <DateText>2017/01/10</DateText>
                  <DateAddon><CalendarIcon /></DateAddon>
                </DateBox>
              </Field>
            ))}
            <Field $w={202}><FieldName>현장명</FieldName><SelectBox $w={100}><SelectValue>전체</SelectValue><Arrows /></SelectBox></Field>
            <Field $gap={9}><FieldName>차량번호</FieldName><SelectBox $w={117}><SelectValue>전체</SelectValue><Arrows /></SelectBox></Field>
            <SearchButton type="button">검색</SearchButton>
          </SearchBar>
          <Columns>
            <Panel $w={366} $h={700}>
              <PanelHead><HeadText>통계</HeadText></PanelHead>
              <StatsBody>
                <StatsPair $h={285}>
                  <ChartColumn>
                    <ChartTitle>운반량(총계)<Legend><Badge $tone="red" $w={31}>목표</Badge><Badge $tone="green" $w={32}>실행</Badge></Legend></ChartTitle>
                    <BarChart labels={['3,000', '2,250', '1,500', '750', '0']} axis={42} from={55} to={112} top={32} bars={[[62, 139, '#ff5500'], [85, 77, '#1fd818']]} />
                  </ChartColumn>
                  <ChartColumn>
                    <ChartTitle>운반량(해당차량)<Legend><Badge $tone="red" $w={31}>목표</Badge><Badge $tone="green" $w={32}>실행</Badge></Legend></ChartTitle>
                    <BarChart labels={['1', '0.75', '0.5', '0.25', '0']} axis={35.5} from={48} to={112} top={22} />
                  </ChartColumn>
                </StatsPair>
                <StatsPair $h={187}>
                  <Panel $w={137} $h={156}>
                    <PanelHead $center><HeadText>총계</HeadText></PanelHead>
                    <Gauges>
                      <div>달성율<GaugeValue>55.30 %</GaugeValue></div>
                      <div>생산성<GaugeValue>2.90 %</GaugeValue></div>
                    </Gauges>
                  </Panel>
                  <Panel $w={137} $h={108}>
                    <PanelHead $center><HeadText>해당차량</HeadText></PanelHead>
                    <Gauges><div>달성율</div><div>생산성</div></Gauges>
                  </Panel>
                </StatsPair>
                <WorkHead>업무시간 평균<Badge $tone="blue" $w={57} $h={20}>자세히 보기</Badge></WorkHead>
                <Progress>
                  <Segment $tone="green" $w={15}>상</Segment>
                  <Segment $tone="red" $w={56}>대기</Segment>
                  <Segment $tone="orange" $w={141}>이동</Segment>
                  <Segment $tone="blue" $w={71}>휴식</Segment>
                  <Segment $tone="cyan" $w={21}>업</Segment>
                </Progress>
                <SectionLabel>해당차량</SectionLabel>
              </StatsBody>
            </Panel>
            <Panel $w={762} $h={700}>
              <PanelHead>
                <BadgeRow>
                  <Badge $tone="green" $w={45}>ON : 0</Badge>
                  <Badge $tone="orange" $w={57}>OFF : 31</Badge>
                  <Badge $tone="blue" $w={69}>TOTAL : 31</Badge>
                </BadgeRow>
              </PanelHead>
              <LiveBody>
                <MapView>
                  <MapCanvas />
                  {tips.map(t => (
                    <Tip key={t.time} $x={t.x} $y={t.y} $w={t.w} $h={t.h}>
                      {t.time}
                      <TipRow $inset={t.b ? 10 : 8}><span>{t.a[0]}</span><span>{t.a[1]}</span></TipRow>
                      {t.b && <TipRow $inset={8}><span>{t.b[0]}</span><span>{t.b[1]}</span></TipRow>}
                      <TipMask $x={t.b ? 18 : 14}>
                        <Mosaic rows={t.b ? wideMask : tallMask} cell={t.b ? 11 : 10} first={t.b ? 4 : 7} rowHeight={12} />
                        {!t.b && (
                          <svg width="47" height="2"><path d="M0 1H47" stroke="#8a8986" strokeWidth="2" /><path d="M21 1H41" stroke="#8a5230" strokeWidth="2" /></svg>
                        )}
                      </TipMask>
                    </Tip>
                  ))}
                  <MapType><MapTypeItem $on>지도</MapTypeItem><MapTypeItem>위성</MapTypeItem></MapType>
                  <Fullscreen><Stroke width="15" height="15" strokeWidth="2"><path d="M1 5V1H5M10 1H14V5M14 10V14H10M5 14H1V10" /></Stroke></Fullscreen>
                </MapView>
                <VehicleList>
                  {vehicles.map(([region, last], i) => (
                    <Vehicle key={i}>
                      <Plate><span>{region}</span><span>{last}</span></Plate>
                      <Badge $tone="orange" $w={34} $h={16}>OFF</Badge>
                    </Vehicle>
                  ))}
                </VehicleList>
              </LiveBody>
            </Panel>
          </Columns>
        </Clip>
      </Window>
      <Overlay $x={54} $y={74}>
        <svg width="275" height="54" shapeRendering="crispEdges">
          <rect width="6" height="53" fill="#12233f" />
          <rect x="6" width="268" height="2" fill="#56667f" />
          <rect x="6" y="52" width="268" height="1" fill="#a5adb9" />
        </svg>
      </Overlay>
      <Overlay $x={60} $y={76}><Mosaic rows={logoRows} /></Overlay>
      <Overlay $x={1130} $y={86}><Mosaic rows={accountRows} /></Overlay>
      <Overlay $x={1251} $y={86}><Mosaic rows={accountEdge} /></Overlay>
      <Overlay $x={1130} $y={126}><svg width="135" height="3"><rect width="135" height="3" fill="#b2b9c3" /></svg></Overlay>
      <Overlay $x={1104} $y={346}><Mosaic rows={plateRows} first={6} /></Overlay>
      <Overlay $x={1104} $y={886}><svg width="56" height="3"><rect width="56" height="3" fill="#1e1f20" /></svg></Overlay>
    </Desktop>
  );
}
